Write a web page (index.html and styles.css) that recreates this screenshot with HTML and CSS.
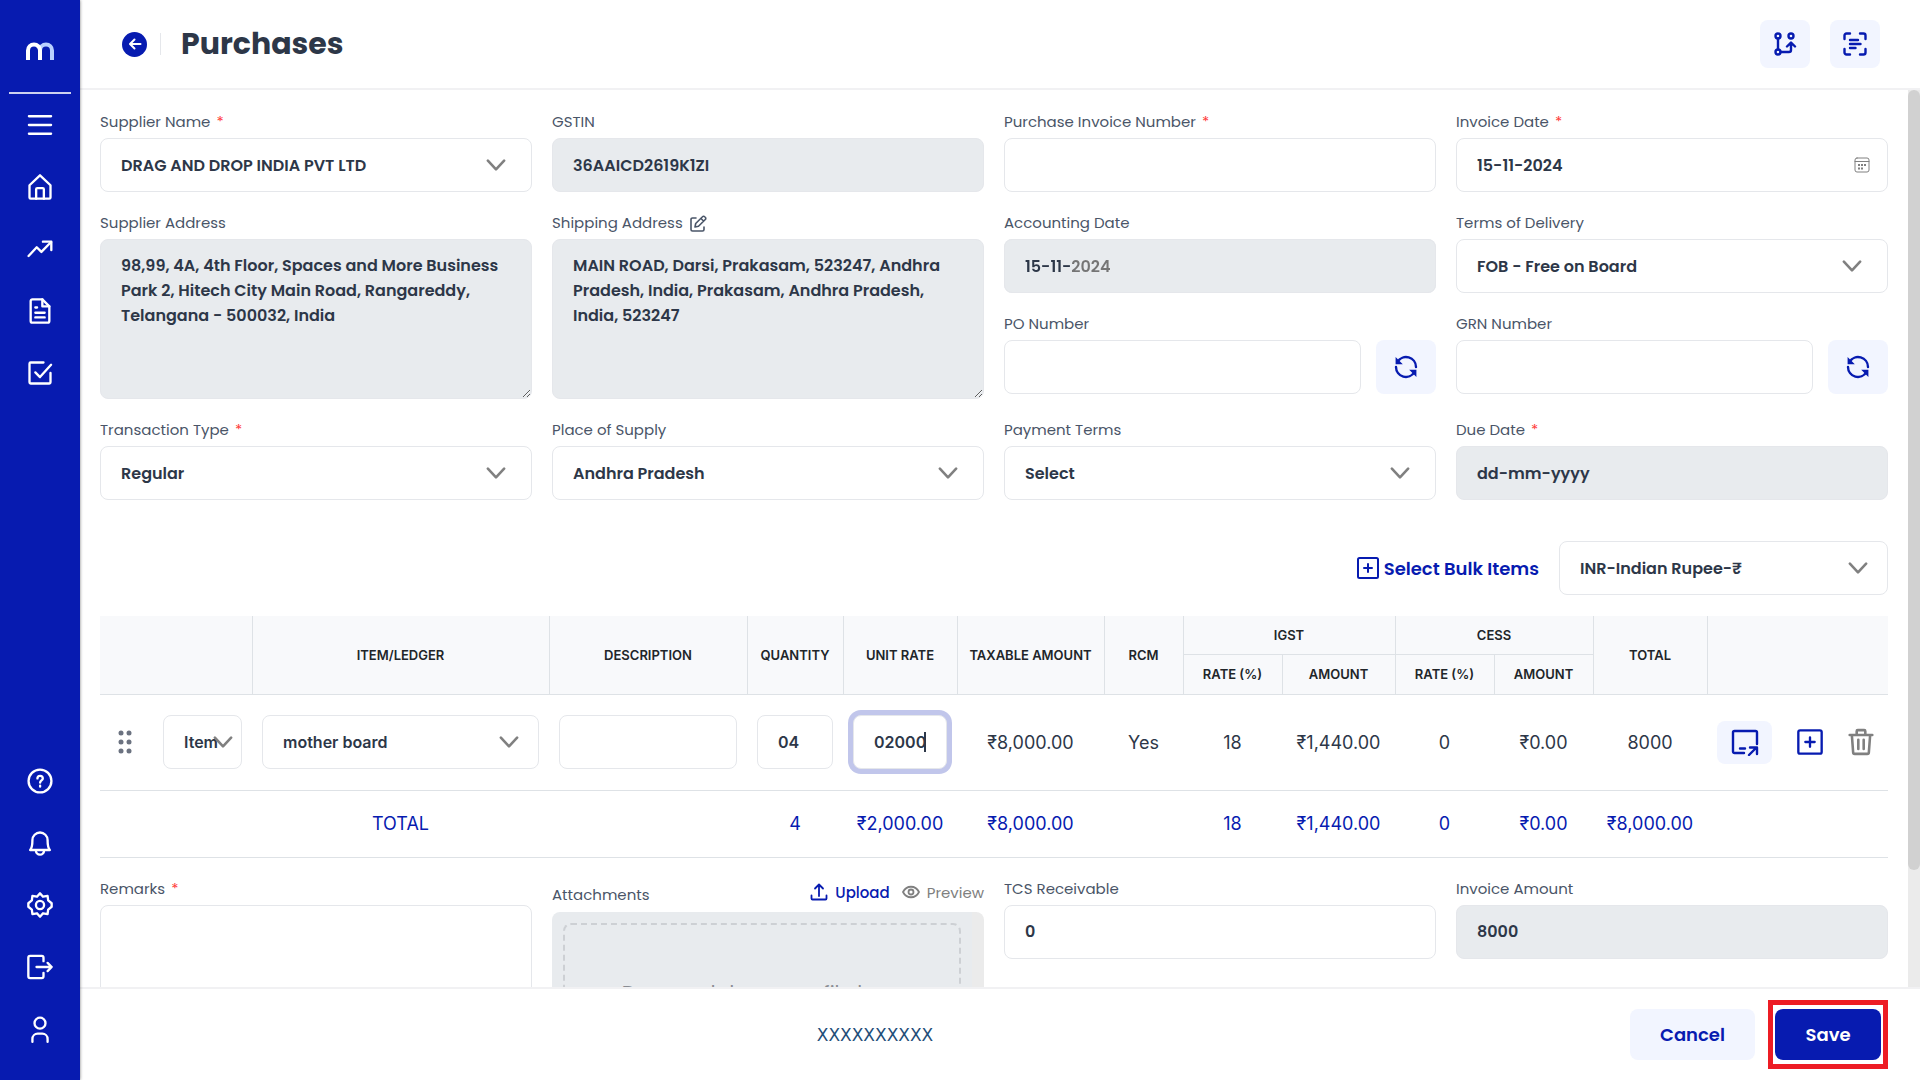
FILE: index.html
```html
<!DOCTYPE html>
<html lang="en">
<head>
    <meta charset="UTF-8">
    <meta name="viewport" content="width=device-width, initial-scale=1.0">
    <title>Purchases</title>
    <link rel="stylesheet" href="styles.css">
</head>
<body>
    <!-- icons used more than once -->
    <svg class="sprite" aria-hidden="true">
        <symbol id="chevron" viewBox="0 0 18 12"><path d="M1.5 1.5 9 9.5l7.5-8"/></symbol>
        <symbol id="refresh" viewBox="0 0 24 24"><path d="M2 12a10 10 0 0 0 18.5 5.2M22 12A10 10 0 0 0 3.5 6.8"/><path class="fill" d="M1.6 2v7.2h7.2zM22.4 22v-7.2h-7.2z"/></symbol>
        <symbol id="plus-box" viewBox="0 0 24 24"><rect x="2" y="2" width="20" height="20" rx="1.5"/><path d="M12 8v8M8 12h8"/></symbol>
    </svg>

    <aside class="sidebar">
        <a href="#" class="logo" aria-label="Home page">
            <svg width="28" height="18" viewBox="0 0 28 18"><path class="logo-back" d="M14 17V8.500a6 6 0 0 1 12 0V18"/><path d="M2 18V8.500a6 6 0 0 1 12 0V18"/></svg>
        </a>
        <nav class="nav">
            <a href="#" aria-label="Menu"><svg viewBox="0 0 24 24"><path d="M2.500 4.500h19M2.500 12h19M2.500 19.500h19"/></svg></a>
            <a href="#" aria-label="Home"><svg viewBox="0 0 24 24"><path d="M3 10.500 12 2l9 8.500V21a1 1 0 0 1-1 1H4a1 1 0 0 1-1-1z"/><path d="M8.700 22v-8a1 1 0 0 1 1-1h4.600a1 1 0 0 1 1 1v8"/></svg></a>
            <a href="#" aria-label="Sales"><svg viewBox="0 0 24 24"><path d="m2.200 18 7-7.500 4 4L21.500 6"/><path d="M14.500 5.700h7.200v7.200"/></svg></a>
            <a href="#" aria-label="Documents"><svg viewBox="0 0 24 24"><path d="M4 3.500A1.500 1.500 0 0 1 5.500 2H14l6 6v12.500a1.500 1.500 0 0 1-1.500 1.500h-13A1.500 1.500 0 0 1 4 20.500z"/><path d="M14 2v6h6M8 9h1.500M8 13.500h8M8 17.500h8"/></svg></a>
            <a href="#" aria-label="Tasks"><svg viewBox="0 0 24 24"><path d="M15 3H4a1 1 0 0 0-1 1v16a1 1 0 0 0 1 1h16a1 1 0 0 0 1-1v-8"/><path d="m8 11.500 4 4L21.500 5"/></svg></a>
        </nav>
        <nav class="nav nav-bottom">
            <a href="#" aria-label="Help"><svg viewBox="0 0 24 24"><circle cx="12" cy="12" r="9.800"/><path d="M9.800 9.800c0-3 4.600-3 4.600 0 0 1.700-2.300 1.700-2.300 3.600M12.100 16v.8"/></svg></a>
            <a href="#" aria-label="Notifications"><svg viewBox="0 0 24 24"><path d="M3.500 18c1.700-1.500 2-3 2-8.500a6.500 6.500 0 0 1 13 0c0 5.500.3 7 2 8.500z"/><path d="M8.500 18.500a3.500 3.500 0 0 0 7 0"/></svg></a>
            <a href="#" aria-label="Settings"><svg viewBox="0 0 24 24"><circle cx="12" cy="12" r="3.500"/><path d="m12 2 2.600 2.900 3.900-.7.500 3.900 3 2.400v3l-3 2.400-.5 3.900-3.900-.7L12 22l-2.600-2.900-3.900.7-.5-3.900-3-2.400v-3l3-2.400.5-3.900 3.900.7z"/></svg></a>
            <a href="#" aria-label="Log out"><svg viewBox="0 0 24 24"><path d="M15 7V4a1.500 1.500 0 0 0-1.500-1.500h-10A1.500 1.500 0 0 0 2 4v16a1.500 1.500 0 0 0 1.500 1.500h10A1.500 1.500 0 0 0 15 20v-3"/><path d="M9 12h13M18.500 8.500 22 12l-3.500 3.500"/></svg></a>
            <a href="#" aria-label="Profile"><svg viewBox="0 0 24 24"><circle cx="12" cy="7" r="4.700"/><path d="M5.500 23v-2.500a4.500 4.500 0 0 1 4.500-4.500h4a4.500 4.500 0 0 1 4.500 4.500V23"/></svg></a>
        </nav>
    </aside>

    <div class="page">
        <header class="topbar">
            <button class="back" type="button" aria-label="Back"><svg width="14" height="14" viewBox="0 0 14 14"><path d="M12.500 7h-10M6.500 2.500 2 7l4.500 4.500"/></svg></button>
            <h1>Purchases</h1>
            <button class="soft-btn" type="button" aria-label="Compare"><svg width="24" height="24" viewBox="0 0 24 24"><circle cx="5" cy="4" r="2.500"/><circle cx="18" cy="4" r="2.500"/><circle cx="5" cy="20" r="2.500"/><path d="M5 6.500v11M7.500 20H16a2 2 0 0 0 2-2v-7M14 14.500l4-4 4 4"/></svg></button>
            <button class="soft-btn" type="button" aria-label="Scan"><svg width="24" height="24" viewBox="0 0 24 24"><path d="M1.500 7V3.500a2 2 0 0 1 2-2H7M17 1.500h3.500a2 2 0 0 1 2 2V7M22.500 17v3.500a2 2 0 0 1-2 2H17M7 22.500H3.500a2 2 0 0 1-2-2V17M7 8h8M7 12h10.500M7 16h5.500"/></svg></button>
        </header>

        <div class="scroll-area">
            <main class="content">
                <form class="form-grid">
                    <div class="field">
                        <label for="supplier">Supplier Name <span class="req">*</span></label>
                        <div class="select"><select id="supplier"><option>DRAG AND DROP INDIA PVT LTD</option></select><svg><use href="#chevron"/></svg></div>
                    </div>
                    <div class="field">
                        <label for="gstin">GSTIN</label>
                        <input id="gstin" value="36AAICD2619K1ZI" disabled>
                    </div>
                    <div class="field">
                        <label for="invoiceNo">Purchase Invoice Number <span class="req">*</span></label>
                        <input id="invoiceNo">
                    </div>
                    <div class="field">
                        <label for="invoiceDate">Invoice Date <span class="req">*</span></label>
                        <div class="date">
                            <input id="invoiceDate" value="15-11-2024">
                            <svg width="16" height="16" viewBox="0 0 16 16"><rect x="1" y="1" width="14" height="14" rx="2"/><path d="M1 4.500h14"/><path class="dots" d="M4 8h8.500M4 11.500h5.500"/></svg>
                        </div>
                    </div>

                    <div class="field">
                        <label for="supplierAddress">Supplier Address</label>
                        <textarea id="supplierAddress" disabled>98,99, 4A, 4th Floor, Spaces and More Business Park 2, Hitech City Main Road, Rangareddy, Telangana - 500032, India</textarea>
                    </div>
                    <div class="field">
                        <label for="shippingAddress">Shipping Address
                            <svg class="edit" width="18" height="18" viewBox="0 0 18 18"><path d="M7 3H3.500A1.500 1.500 0 0 0 2 4.500v10A1.500 1.500 0 0 0 3.500 16h10a1.500 1.500 0 0 0 1.500-1.500V12"/><path d="m6 12 .7-3.500L13.500 1.700a1.500 1.500 0 0 1 2.200 0l.6.600a1.500 1.500 0 0 1 0 2.200L9.500 11.300zM12 3.500 14.500 6"/></svg>
                        </label>
                        <textarea id="shippingAddress" disabled>MAIN ROAD, Darsi, Prakasam, 523247, Andhra Pradesh, India, Prakasam, Andhra Pradesh, India, 523247</textarea>
                    </div>
                    <div class="stack">
                        <div class="field">
                            <label for="accountingDate">Accounting Date</label>
                            <div class="date-partial"><input id="accountingDate" value="15-11-2024" disabled></div>
                        </div>
                        <div class="field">
                            <label for="po">PO Number</label>
                            <div class="with-btn"><input id="po"><button class="soft-btn" type="button" aria-label="Refresh PO"><svg width="24" height="24"><use href="#refresh"/></svg></button></div>
                        </div>
                    </div>
                    <div class="stack">
                        <div class="field">
                            <label for="delivery">Terms of Delivery</label>
                            <div class="select"><select id="delivery"><option>FOB - Free on Board</option></select><svg><use href="#chevron"/></svg></div>
                        </div>
                        <div class="field">
                            <label for="grn">GRN Number</label>
                            <div class="with-btn"><input id="grn"><button class="soft-btn" type="button" aria-label="Refresh GRN"><svg width="24" height="24"><use href="#refresh"/></svg></button></div>
                        </div>
                    </div>

                    <div class="field">
                        <label for="txType">Transaction Type <span class="req">*</span></label>
                        <div class="select"><select id="txType"><option>Regular</option></select><svg><use href="#chevron"/></svg></div>
                    </div>
                    <div class="field">
                        <label for="place">Place of Supply</label>
                        <div class="select"><select id="place"><option>Andhra Pradesh</option></select><svg><use href="#chevron"/></svg></div>
                    </div>
                    <div class="field">
                        <label for="terms">Payment Terms</label>
                        <div class="select"><select id="terms"><option>Select</option></select><svg><use href="#chevron"/></svg></div>
                    </div>
                    <div class="field">
                        <label for="dueDate">Due Date <span class="req">*</span></label>
                        <input id="dueDate" value="dd-mm-yyyy" disabled>
                    </div>
                </form>

                <div class="toolbar">
                    <button class="bulk" type="button"><svg width="24" height="24"><use href="#plus-box"/></svg>Select Bulk Items</button>
                    <div class="select currency"><select aria-label="Currency"><option>INR-Indian Rupee-₹</option></select><svg><use href="#chevron"/></svg></div>
                </div>

                <table class="items">
                    <colgroup>
                        <col class="c-type"><col><col class="c-desc"><col class="c-qty"><col class="c-total"><col class="c-taxable"><col class="c-rcm"><col class="c-rate"><col class="c-igst"><col class="c-rate"><col class="c-rate"><col class="c-total"><col class="c-actions">
                    </colgroup>
                    <thead>
                        <tr>
                            <th rowspan="2"></th>
                            <th rowspan="2">ITEM/LEDGER</th>
                            <th rowspan="2">DESCRIPTION</th>
                            <th rowspan="2">QUANTITY</th>
                            <th rowspan="2">UNIT RATE</th>
                            <th rowspan="2">TAXABLE AMOUNT</th>
                            <th rowspan="2">RCM</th>
                            <th colspan="2">IGST</th>
                            <th colspan="2">CESS</th>
                            <th rowspan="2">TOTAL</th>
                            <th rowspan="2"></th>
                        </tr>
                        <tr>
                            <th>RATE (%)</th>
                            <th>AMOUNT</th>
                            <th>RATE (%)</th>
                            <th>AMOUNT</th>
                        </tr>
                    </thead>
                    <tbody>
                        <tr>
                            <td>
                                <div class="type-cell">
                                    <svg class="drag" width="14" height="26" viewBox="0 0 14 26"><circle cx="3" cy="4" r="2.500"/><circle cx="11" cy="4" r="2.500"/><circle cx="3" cy="13" r="2.500"/><circle cx="11" cy="13" r="2.500"/><circle cx="3" cy="22" r="2.500"/><circle cx="11" cy="22" r="2.500"/></svg>
                                    <div class="select small"><select aria-label="Type"><option>Item</option></select><svg><use href="#chevron"/></svg></div>
                                </div>
                            </td>
                            <td><div class="select"><select aria-label="Item"><option>mother board</option></select><svg><use href="#chevron"/></svg></div></td>
                            <td><input aria-label="Description"></td>
                            <td><input aria-label="Quantity" value="04"></td>
                            <td><div class="rate-cell"><input aria-label="Unit rate" class="active" value="02000"><span class="caret"></span></div></td>
                            <td>₹8,000.00</td>
                            <td>Yes</td>
                            <td>18</td>
                            <td>₹1,440.00</td>
                            <td>0</td>
                            <td>₹0.00</td>
                            <td>8000</td>
                            <td>
                                <div class="actions">
                                    <button class="soft-btn" type="button" aria-label="Open item"><svg width="28" height="28" viewBox="0 0 28 28"><path d="M13 25H3.500A1.500 1.500 0 0 1 2 23.500v-19A1.500 1.500 0 0 1 3.500 3h21A1.500 1.500 0 0 1 26 4.500V16M9 20.500h5M18 27l7-7M19 19.500h7V26"/></svg></button>
                                    <button type="button" aria-label="Add row"><svg width="28" height="28"><use href="#plus-box"/></svg></button>
                                    <button class="delete" type="button" aria-label="Delete row"><svg width="26" height="28" viewBox="0 0 24 26"><path d="M1.500 6.500h21M8 6V3a1 1 0 0 1 1-1h6a1 1 0 0 1 1 1v3M3.500 6.500l1.200 16A1.500 1.500 0 0 0 6.200 24h11.600a1.500 1.500 0 0 0 1.500-1.500l1.200-16M9.500 11v8.500M14.500 11v8.500"/></svg></button>
                                </div>
                            </td>
                        </tr>
                    </tbody>
                    <tfoot>
                        <tr>
                            <td></td>
                            <td>TOTAL</td>
                            <td></td>
                            <td>4</td>
                            <td>₹2,000.00</td>
                            <td>₹8,000.00</td>
                            <td></td>
                            <td>18</td>
                            <td>₹1,440.00</td>
                            <td>0</td>
                            <td>₹0.00</td>
                            <td>₹8,000.00</td>
                            <td></td>
                        </tr>
                    </tfoot>
                </table>

                <div class="form-grid form-bottom">
                    <div class="field">
                        <label for="remarks">Remarks <span class="req">*</span></label>
                        <textarea id="remarks"></textarea>
                    </div>
                    <div class="field">
                        <div class="attach-head">
                            <span class="attach-title">Attachments</span>
                            <button type="button"><svg width="18" height="18" viewBox="0 0 18 18"><path d="M9 13V2M5 5.500 9 1.500l4 4M1.500 12.500v3a1 1 0 0 0 1 1h13a1 1 0 0 0 1-1v-3"/></svg>Upload</button>
                            <button class="muted" type="button"><svg width="18" height="18" viewBox="0 0 18 18"><path d="M1 9c3.500-7 12.500-7 16 0-3.500 7-12.500 7-16 0z"/><circle cx="9" cy="9" r="2.500"/></svg>Preview</button>
                        </div>
                        <div class="dropzone"><div class="drop-area">Drag and drop your file here</div></div>
                    </div>
                    <div class="field">
                        <label for="tcs">TCS Receivable</label>
                        <input id="tcs" value="0">
                    </div>
                    <div class="field">
                        <label for="amount">Invoice Amount</label>
                        <input id="amount" value="8000" disabled>
                    </div>
                </div>
            </main>
            <div class="scrollbar"><div class="thumb"></div></div>
        </div>

        <footer class="footer">
            <p>XXXXXXXXXX</p>
            <button class="cancel" type="button">Cancel</button>
            <div class="highlight"><button class="save" type="button">Save</button></div>
        </footer>
    </div>
</body>
</html>
```
FILE: styles.css
```css
* {
    box-sizing: border-box;
}
body {
    margin: 0;
    height: 100vh;
    display: flex;
    overflow: hidden;
    font-family: Poppins, Inter, sans-serif;
    font-size: 16px;
    color: #2d3748;
    background-color: white;
}
svg {
    fill: none;
    stroke: currentColor;
    stroke-width: 2;
    stroke-linecap: round;
    stroke-linejoin: round;
    flex-shrink: 0;
}
.fill {
    fill: currentColor;
    stroke: none;
}
.sprite {
    display: none;
}
button {
    font-family: inherit;
    border: none;
    padding: 0;
    background: none;
    color: #071bb0;
    cursor: pointer;
}

/* sidebar */
.sidebar {
    width: 80px;
    flex-shrink: 0;
    display: flex;
    flex-direction: column;
    align-items: center;
    padding-bottom: 20px;
    background-color: #071bb0;
    color: white;
    box-shadow: 0 0 3px rgba(0, 0, 0, 0.5);
    z-index: 1;
}
.logo {
    width: 62px;
    height: 94px;
    padding-top: 10px;
    display: flex;
    align-items: center;
    justify-content: center;
    color: white;
    border-bottom: 2px solid #cdd1ef;
}
.logo svg {
    stroke-width: 4;
    stroke-linecap: butt;
}
.logo-back {
    stroke: #b9d0ff;
}
.nav a {
    display: flex;
    align-items: center;
    justify-content: center;
    width: 62px;
    height: 62px;
    color: white;
}
.nav svg {
    width: 28px;
    height: 28px;
}
.nav-bottom {
    margin-top: auto;
}

/* header */
.page {
    flex: 1;
    min-width: 0;
    display: flex;
    flex-direction: column;
}
.topbar {
    display: flex;
    align-items: center;
    gap: 20px;
    height: 90px;
    flex-shrink: 0;
    padding: 0 40px 0 42px;
    border-bottom: 2px solid #f1f1f3;
}
.back {
    width: 25px;
    height: 25px;
    display: flex;
    align-items: center;
    justify-content: center;
    border-radius: 50%;
    background-color: #071bb0;
    color: white;
}
.topbar h1 {
    flex: 1;
    margin: 0 0 0 -7px;
    padding-left: 20px;
    border-left: 1px solid #e5e7eb;
    font-size: 30px;
    line-height: 22px;
    font-weight: 700;
}
.soft-btn {
    display: flex;
    align-items: center;
    justify-content: center;
    width: 50px;
    height: 48px;
    border-radius: 8px;
    background-color: #f2f5ff;
}
.soft-btn svg {
    stroke-width: 2.4;
}

/* scrolling area */
.scroll-area {
    flex: 1;
    min-height: 0;
    display: flex;
}
.content {
    flex: 1;
    min-width: 0;
    overflow-y: auto;
    scrollbar-width: none;
    padding: 20px 20px 50px;
}
.scrollbar {
    width: 12px;
    background-color: #ebebeb;
}
.thumb {
    height: 87%;
    border-radius: 6px;
    background-color: #d1d1d1;
}
.form-grid {
    display: grid;
    grid-template-columns: repeat(4, 1fr);
    gap: 19px 20px;
    align-items: start;
}
.field {
    min-width: 0;
}
.stack {
    display: flex;
    flex-direction: column;
    gap: 19px;
}
label,
.attach-title {
    display: block;
    height: 24px;
    margin-bottom: 4px;
    font-size: 15px;
    line-height: 24px;
    color: #4a5568;
}
.req {
    margin-left: 2px;
    color: #ff3b3b;
}
.edit {
    margin-left: 2px;
    vertical-align: middle;
    stroke-width: 1.6;
}
input,
select,
textarea {
    display: block;
    width: 100%;
    height: 54px;
    padding: 0 20px;
    border: 1px solid #e5e7eb;
    border-radius: 8px;
    background-color: white;
    font-family: inherit;
    font-size: 16px;
    font-weight: 600;
    color: #2d3748;
    opacity: 1;
    outline: none;
}
input:disabled,
textarea:disabled {
    background-color: #e8ebee;
    color: #2d3748;
}
select {
    appearance: none;
}
textarea {
    height: 160px;
    padding: 13px 20px;
    line-height: 25px;
}
.select,
.date,
.rate-cell {
    position: relative;
}
.select svg {
    position: absolute;
    right: 26px;
    top: 21px;
    width: 20px;
    height: 13px;
    color: #808080;
    stroke-width: 2.4;
    pointer-events: none;
}
.date svg {
    position: absolute;
    right: 18px;
    top: 19px;
    color: #808080;
    stroke-width: 1;
}
.date .dots {
    stroke-width: 2;
    stroke-linecap: butt;
    stroke-dasharray: 2 1;
}
/* day and month are set, the year is still greyed */
.date-partial {
    border-radius: 8px;
    background-color: #e8ebee;
}
.date-partial input:disabled {
    background: linear-gradient(90deg, #2d3748 66px, #757575 66px);
    background-clip: text;
    -webkit-text-fill-color: transparent;
}
.with-btn {
    display: flex;
    gap: 15px;
}
.with-btn .soft-btn {
    width: 60px;
    height: 54px;
    flex-shrink: 0;
}
.toolbar {
    display: flex;
    justify-content: flex-end;
    align-items: center;
    gap: 20px;
    margin: 41px 0 21px;
}
.bulk {
    display: flex;
    align-items: center;
    gap: 4px;
    font-size: 18px;
    font-weight: 600;
}
.currency {
    width: 329px;
}

/* items table */
.items {
    width: 100%;
    table-layout: fixed;
    border-collapse: collapse;
    font-family: Inter, sans-serif;
    text-align: center;
}
.c-type {
    width: 152px;
}
.c-desc {
    width: 198px;
}
.c-qty {
    width: 96px;
}
.c-total {
    width: 114px;
}
.c-taxable {
    width: 147px;
}
.c-rcm {
    width: 79px;
}
.c-rate {
    width: 99px;
}
.c-igst {
    width: 113px;
}
.c-actions {
    width: 181px;
}
.items th {
    height: 38px;
    padding: 0;
    border: 1px solid #dee2e6;
    border-top: none;
    background-color: #f8f9fb;
    font-size: 13px;
    font-weight: 600;
    color: #212529;
}
.items tr + tr th {
    height: 40px;
}
.items th:first-child[rowspan] {
    border-left: none;
}
.items th:last-child[rowspan] {
    border-right: none;
}
.items td {
    height: 96px;
    padding: 0 10px;
    border-bottom: 1px solid #dee2e6;
    font-size: 18px;
    white-space: nowrap;
}
.items tfoot td {
    height: 67px;
    padding: 0;
    color: #071bb0;
}
.items .select svg,
.currency svg {
    right: 20px;
}
.items input.active {
    box-shadow: 0 0 0 5px #c1c6eb;
}
.caret {
    position: absolute;
    left: 71px;
    top: 17px;
    width: 2px;
    height: 20px;
    background-color: #2d3748;
}
.type-cell {
    display: flex;
    align-items: center;
    justify-content: space-between;
    padding-left: 8px;
}
.drag {
    fill: #6b7280;
    stroke: none;
}
.small {
    width: 79px;
}
.small select {
    padding-right: 0;
}
.items .small svg {
    right: 9px;
}
.actions {
    display: flex;
    align-items: center;
    justify-content: space-between;
    padding-right: 4px;
}
.actions button {
    display: flex;
}
.actions .soft-btn {
    width: 55px;
    height: 43px;
}
.delete {
    color: #808080;
}
.delete svg {
    stroke-width: 2.4;
}

/* bottom row */
.form-bottom {
    margin-top: 19px;
}
.attach-head {
    display: flex;
    align-items: center;
    gap: 12px;
    height: 31px;
    margin-bottom: 4px;
}
.attach-title {
    flex: 1;
    margin: 6px 0 0;
}
.attach-head button {
    display: flex;
    align-items: center;
    gap: 7px;
    font-size: 15px;
    font-weight: 500;
}
.attach-head .muted {
    color: #808080;
    font-weight: 400;
}
.attach-head svg {
    stroke-width: 1.8;
}
.dropzone {
    height: 154px;
    padding: 11px;
    border-right: 12px solid #ebebeb;
    border-radius: 8px;
    background-color: #e8ebee;
}
.drop-area {
    height: 132px;
    padding-top: 56px;
    border: 2px dashed #cdd0d4;
    border-radius: 8px;
    text-align: center;
    font-size: 20px;
    line-height: 24px;
    color: #8a8d93;
}

/* footer */
.footer {
    display: flex;
    align-items: center;
    height: 93px;
    flex-shrink: 0;
    padding: 0 32px 0 40px;
    border-top: 2px solid #f1f1f3;
}
.footer p {
    flex: 1;
    margin: 0;
    text-align: center;
    font-family: "DejaVu Sans", sans-serif;
    font-size: 17px;
    color: #1f4e79;
}
.footer button {
    height: 51px;
    border-radius: 8px;
    font-size: 18px;
    font-weight: 600;
}
.footer .cancel {
    width: 125px;
    margin-right: 13px;
    background-color: #f2f5ff;
}
.footer .save {
    display: block;
    width: 106px;
    background-color: #071bb0;
    color: white;
}
.highlight {
    padding: 4px 2px;
    border: 5px solid #ed1c24;
}
```
